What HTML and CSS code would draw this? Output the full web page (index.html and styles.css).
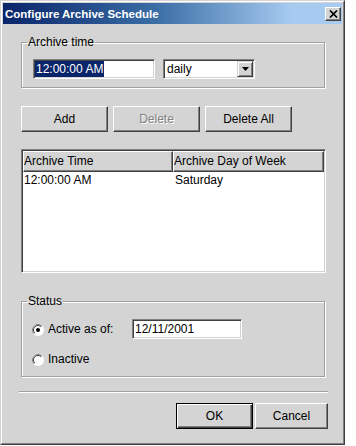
FILE: index.html
```html
<!DOCTYPE html>
<html lang="en">

<head>
    <meta charset="UTF-8">
    <title>Configure Archive Schedule</title>
    <link rel="stylesheet" href="styles.css">
</head>

<body>
    <div class="window">
        <div class="frame">
            <div class="titlebar">
                <span class="title">Configure Archive Schedule</span>
                <button class="close">
                    <svg width="9" height="8" viewBox="0 0 9 8">
                        <path d="M1 0.5 L8 7.5 M8 0.5 L1 7.5" stroke="#000" stroke-width="1.7" fill="none"/>
                    </svg>
                </button>
            </div>

            <div class="content">
                <fieldset class="group time-group">
                    <legend>Archive time</legend>
                    <div class="row">
                        <div class="field time-field"><span class="sel">12:00:00 AM</span></div>
                        <div class="field combo">
                            <span class="combo-text">daily</span>
                            <span class="arrow">
                                <svg width="7" height="4" viewBox="0 0 7 4">
                                    <polygon points="0,0 7,0 3.5,4" fill="#000"/>
                                </svg>
                            </span>
                        </div>
                    </div>
                </fieldset>

                <div class="actions">
                    <button class="btn">Add</button>
                    <button class="btn" disabled>Delete</button>
                    <button class="btn">Delete All</button>
                </div>

                <div class="table">
                    <div class="thead">
                        <div class="th col-time">Archive Time</div>
                        <div class="th col-day">Archive Day of Week</div>
                    </div>
                    <div class="tr">
                        <div class="td col-time">12:00:00 AM</div>
                        <div class="td col-day">Saturday</div>
                    </div>
                </div>

                <fieldset class="group status-group">
                    <legend>Status</legend>
                    <div class="radio-row">
                        <span class="radio">
                            <svg width="12" height="12" viewBox="0 0 12 12">
                                <circle cx="6" cy="6" r="6" fill="#fff"/>
                                <path d="M2.1 9.9 A5.5 5.5 0 0 1 9.9 2.1" stroke="#808080" fill="none"/>
                                <path d="M2.8 9.2 A4.5 4.5 0 0 1 9.2 2.8" stroke="#404040" fill="none"/>
                                <circle cx="6" cy="6" r="2" fill="#000"/>
                            </svg>
                        </span>
                        <span class="radio-label">Active as of:</span>
                        <div class="field date-field">12/11/2001</div>
                    </div>
                    <div class="radio-row">
                        <span class="radio">
                            <svg width="12" height="12" viewBox="0 0 12 12">
                                <circle cx="6" cy="6" r="6" fill="#fff"/>
                                <path d="M2.1 9.9 A5.5 5.5 0 0 1 9.9 2.1" stroke="#808080" fill="none"/>
                                <path d="M2.8 9.2 A4.5 4.5 0 0 1 9.2 2.8" stroke="#404040" fill="none"/>
                            </svg>
                        </span>
                        <span class="radio-label">Inactive</span>
                    </div>
                </fieldset>

                <div class="separator"></div>

                <div class="footer">
                    <button class="btn default ok">OK</button>
                    <button class="btn cancel">Cancel</button>
                </div>
            </div>
        </div>
    </div>
</body>

</html>
```

FILE: styles.css
```css
body {
    margin: 0;
    padding: 0;
    background: #fff;
    font-family: 'Liberation Sans', Arial, sans-serif;
    font-size: 12px;
    color: #000;
}

.window {
    box-sizing: border-box;
    width: 345px;
    height: 445px;
    border: 1px solid;
    border-color: #d4d4d4 #404040 #404040 #d4d4d4;
}

.frame {
    box-sizing: border-box;
    height: 100%;
    border: 1px solid;
    border-color: #fff #808080 #808080 #fff;
    padding: 1px;
    background: #d4d4d4;
}

.titlebar {
    height: 21px;
    display: flex;
    align-items: center;
    justify-content: space-between;
    padding: 0 1px 0 2px;
    background: linear-gradient(to right, #0a246a 0%, #3a6ea5 45%, #a6caf0 85%, #a6caf0 100%);
}

.title {
    color: #fff;
    font-weight: bold;
    font-size: 11.5px;
}

.close {
    box-sizing: border-box;
    width: 16px;
    height: 14px;
    padding: 0;
    display: flex;
    align-items: center;
    justify-content: center;
    background: #d4d4d4;
    border: 1px solid;
    border-color: #fff #404040 #404040 #fff;
    box-shadow: inset -1px -1px 0 #808080;
}

.content {
    padding: 11px 14px 0 18px;
}

/* group boxes */
.group {
    box-sizing: border-box;
    width: 304px;
    margin: 0;
    border: 1px solid #a0a0a0;
    box-shadow: 1px 1px 0 #fff, inset 1px 1px 0 #fff;
}

.group legend {
    padding: 0 1px;
    line-height: 14px;
}

.time-group {
    padding: 10px 11px 8px 11px;
}

.time-group legend {
    margin-left: -6px;
}

.status-group {
    margin-top: 21px;
    padding: 11px 10px 7px 10px;
}

.status-group legend {
    margin-left: -5px;
}

.row {
    display: flex;
    gap: 8px;
}

.field {
    box-sizing: border-box;
    height: 20px;
    background: #fff;
    border: 1px solid;
    border-color: #808080 #fff #fff #808080;
    box-shadow: inset 1px 1px 0 #404040, inset -1px -1px 0 #d4d4d4;
    display: flex;
    align-items: center;
}

.time-field {
    width: 122px;
    padding-left: 1px;
}

.sel {
    background: #0a246a;
    color: #fff;
    line-height: 16px;
    padding: 0 1px;
}

.combo {
    width: 92px;
    padding: 1px 1px 1px 3px;
    justify-content: space-between;
}

.arrow {
    box-sizing: border-box;
    width: 16px;
    height: 16px;
    display: flex;
    align-items: center;
    justify-content: center;
    background: #d4d4d4;
    border: 1px solid;
    border-color: #d4d4d4 #404040 #404040 #d4d4d4;
    box-shadow: inset 1px 1px 0 #fff, inset -1px -1px 0 #808080;
}

/* buttons */
.btn {
    box-sizing: border-box;
    height: 26px;
    padding: 0;
    font-family: 'Liberation Sans', Arial, sans-serif;
    font-size: 12px;
    color: #000;
    background: #d4d4d4;
    border: 1px solid;
    border-color: #fff #404040 #404040 #fff;
    box-shadow: inset -1px -1px 0 #808080;
}

.btn:disabled {
    color: #808080;
    text-shadow: 1px 1px 0 #fff;
}

.actions {
    display: flex;
    gap: 5px;
    margin-top: 18px;
}

.actions .btn {
    width: 87px;
}

/* table */
.table {
    box-sizing: border-box;
    width: 305px;
    height: 124px;
    margin-top: 17px;
    background: #fff;
    border: 1px solid;
    border-color: #808080 #fff #fff #808080;
    box-shadow: inset 1px 1px 0 #404040, inset -1px -1px 0 #d4d4d4;
    padding: 1px;
}

.thead,
.tr {
    display: flex;
}

.th {
    box-sizing: border-box;
    height: 21px;
    line-height: 19px;
    background: #d4d4d4;
    border: 1px solid;
    border-color: #fff #404040 #404040 #fff;
    box-shadow: inset -1px -1px 0 #808080;
    padding-left: 0;
    white-space: nowrap;
    overflow: hidden;
}

.col-time {
    width: 150px;
}

.col-day {
    width: 151px;
}

.td {
    box-sizing: border-box;
    line-height: 16px;
    padding-left: 1px;
}

.td.col-day {
    padding-left: 2px;
}

/* status */
.radio-row {
    display: flex;
    align-items: center;
    height: 20px;
}

.radio-row + .radio-row {
    margin-top: 10px;
}

.radio {
    display: flex;
    width: 12px;
    height: 12px;
    margin-top: 2px;
}

.radio-label {
    margin-left: 4px;
    width: 84px;
}

.date-field {
    width: 110px;
    padding-left: 2px;
}

.separator {
    width: 309px;
    margin: 14px 0 0 -2px;
    border-top: 1px solid #a0a0a0;
    border-bottom: 1px solid #fff;
}

.footer {
    display: flex;
    justify-content: flex-end;
    gap: 2px;
    margin-top: 10px;
}

.ok {
    width: 77px;
}

.cancel {
    width: 73px;
}

.btn.default {
    border: 1px solid #000;
    box-shadow: inset 1px 1px 0 #fff, inset -1px -1px 0 #404040, inset -2px -2px 0 #808080;
}
```
